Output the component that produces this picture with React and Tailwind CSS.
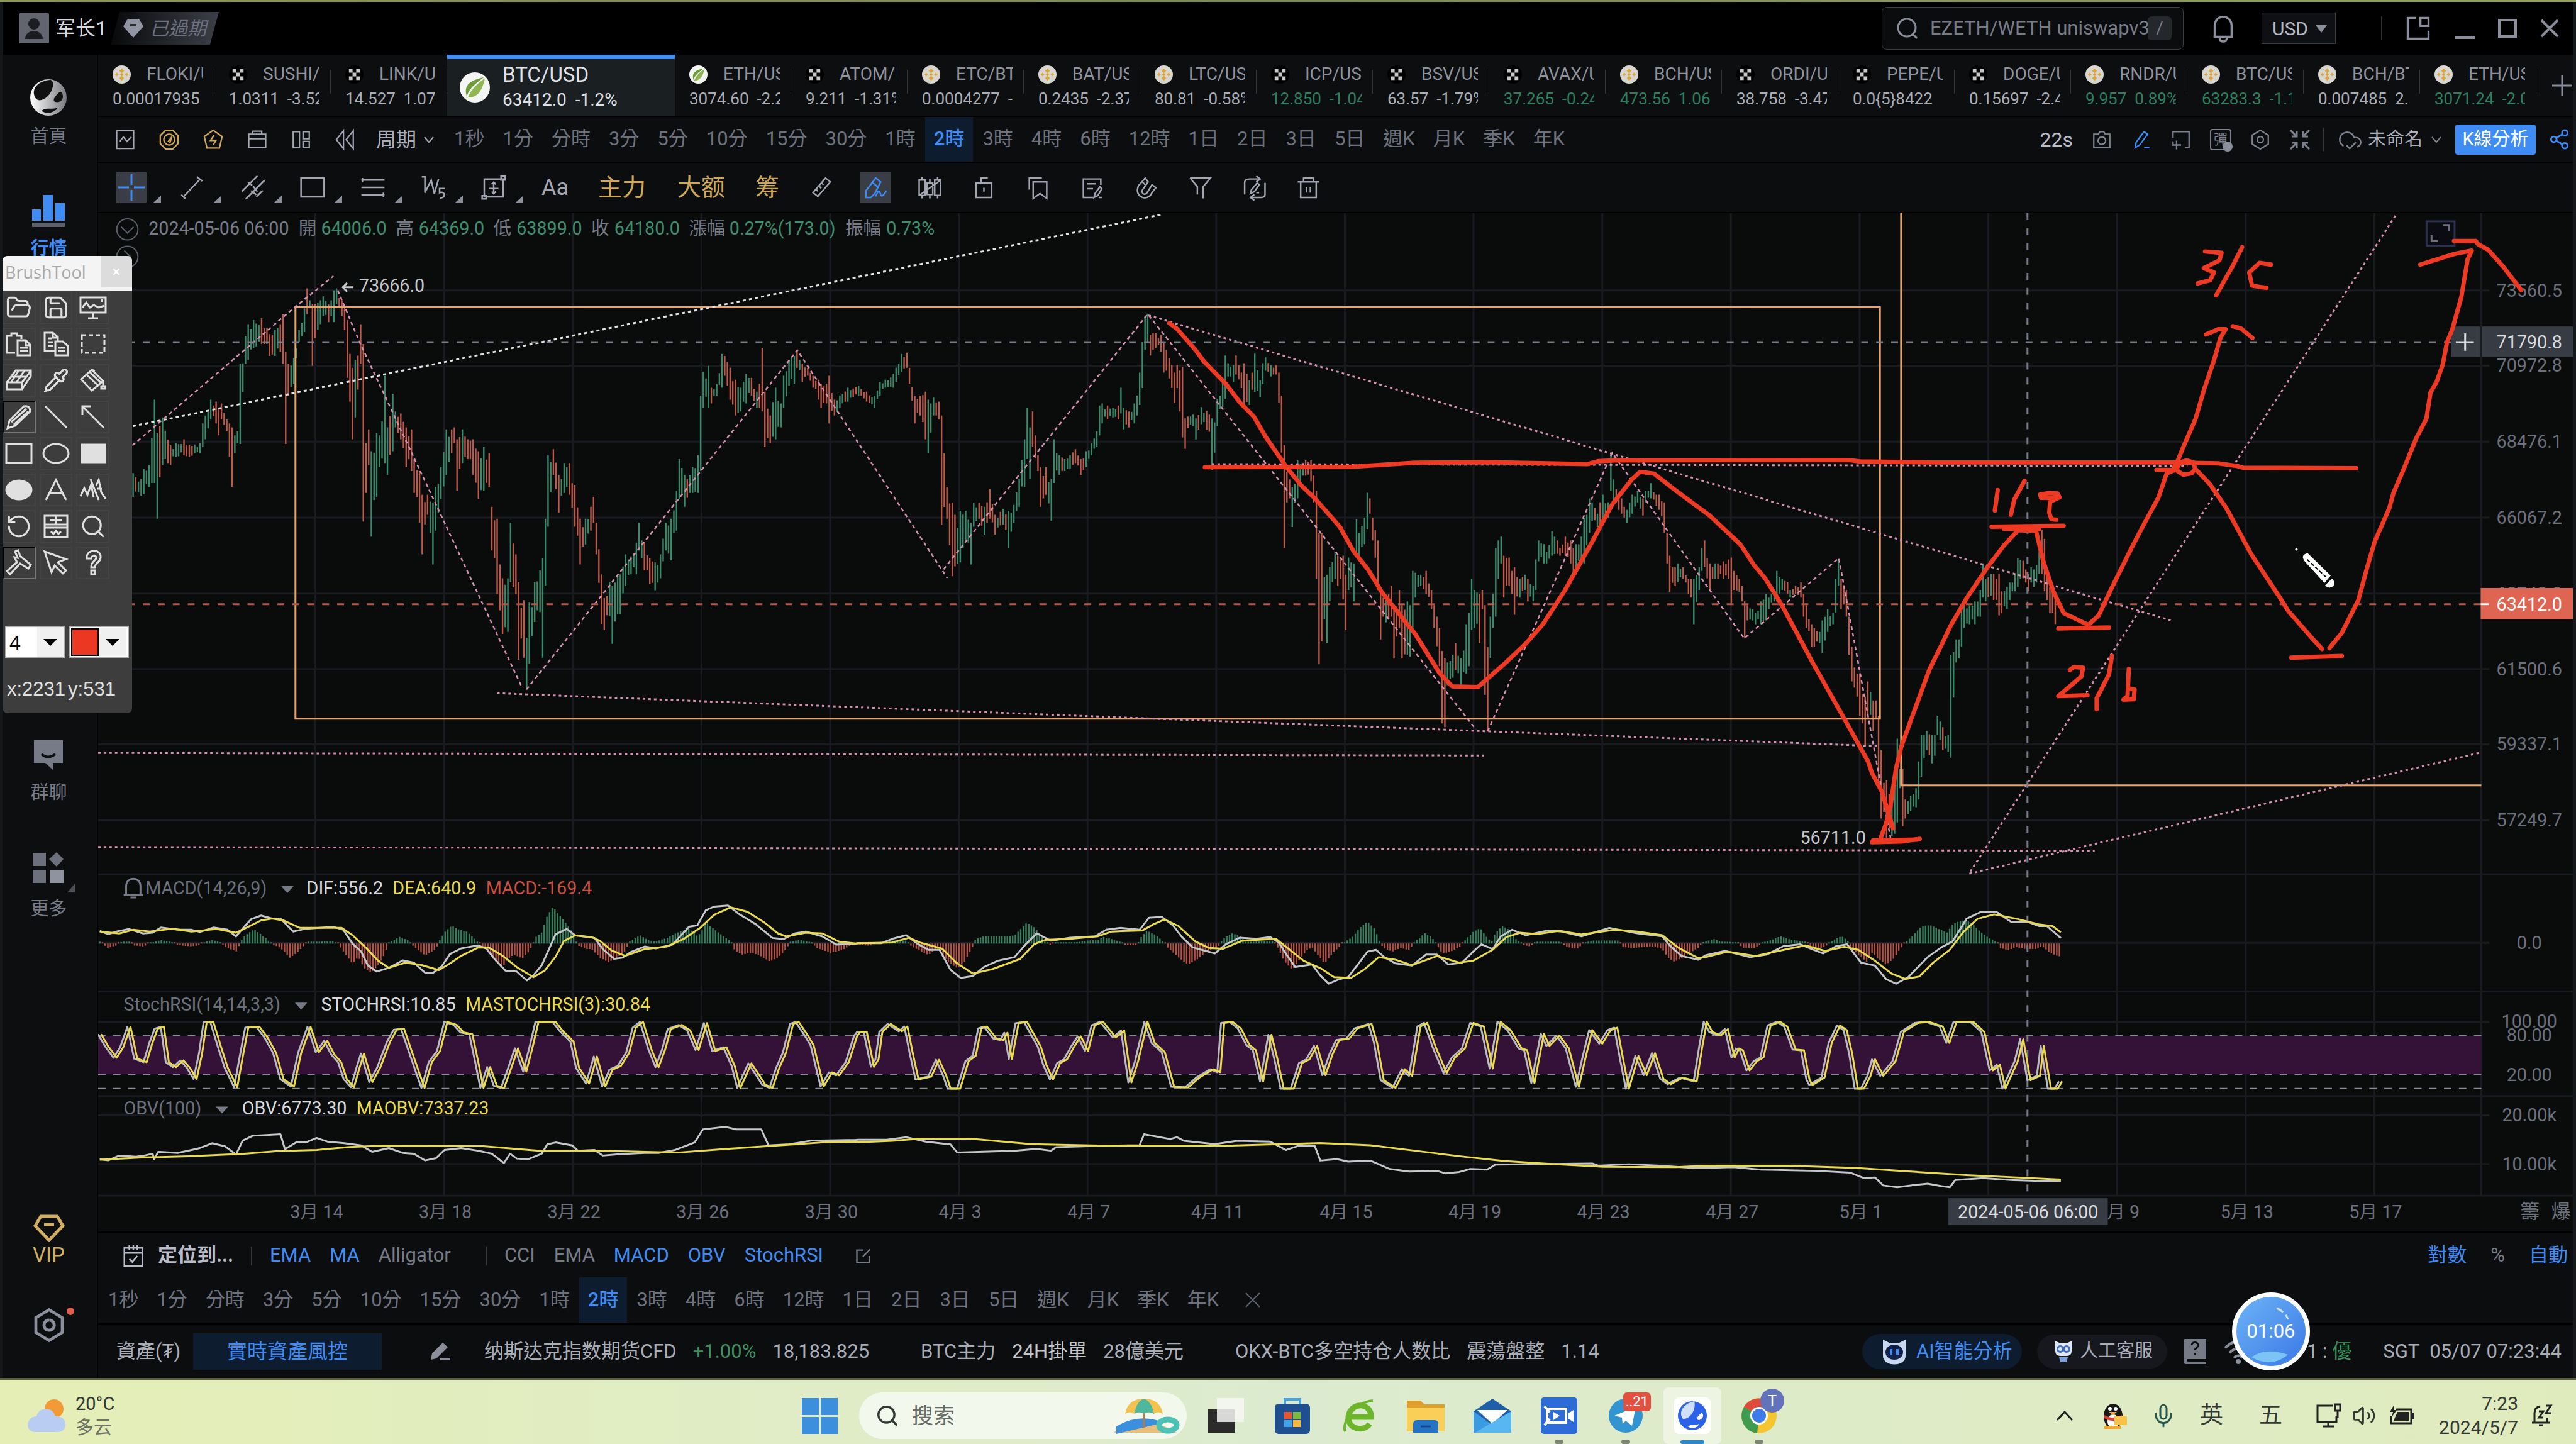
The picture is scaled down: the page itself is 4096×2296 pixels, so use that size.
import React from 'react';
import { FolderOpen, Save, Pipette, Share2, CloudCheck, Mic, Volume2, Search, RotateCcw } from 'lucide-react';

const INTERVALS = ['1秒', '1分', '分時', '3分', '5分', '10分', '15分', '30分', '1時', '2時', '3時', '4時', '6時', '12時', '1日', '2日', '3日', '5日', '週K', '月K', '季K', '年K'];

const TABS = [
  { name: 'FLOKI/USDT', price: '0.00017935', icon: 'bnb' },
  { name: 'SUSHI/USDT', price: '1.0311  -3.52%', icon: 'okx' },
  { name: 'LINK/USDT', price: '14.527  1.07%', icon: 'okx' },
  { name: 'BTC/USD', price: '63412.0  -1.2%', icon: 'leaf', active: true },
  { name: 'ETH/USD', price: '3074.60  -2.2%', icon: 'leaf' },
  { name: 'ATOM/USDT', price: '9.211  -1.31%', icon: 'okx' },
  { name: 'ETC/BTC', price: '0.0004277  -1%', icon: 'bnb' },
  { name: 'BAT/USDT', price: '0.2435  -2.37%', icon: 'bnb' },
  { name: 'LTC/USDT', price: '80.81  -0.58%', icon: 'bnb' },
  { name: 'ICP/USDT', price: '12.850  -1.04%', icon: 'okx', up: true },
  { name: 'BSV/USDT', price: '63.57  -1.79%', icon: 'okx' },
  { name: 'AVAX/USDT', price: '37.265  -0.24%', icon: 'okx', up: true },
  { name: 'BCH/USDT', price: '473.56  1.06%', icon: 'bnb', up: true },
  { name: 'ORDI/USDT', price: '38.758  -3.47%', icon: 'okx' },
  { name: 'PEPE/USDT', price: '0.0{5}8422', icon: 'okx' },
  { name: 'DOGE/USDT', price: '0.15697  -2.4%', icon: 'okx' },
  { name: 'RNDR/USDT', price: '9.957  0.89%', icon: 'bnb', up: true },
  { name: 'BTC/USDT', price: '63283.3  -1.1%', icon: 'bnb', up: true },
  { name: 'BCH/BTC', price: '0.007485  2.1%', icon: 'bnb' },
  { name: 'ETH/USDT', price: '3071.24  -2.0%', icon: 'bnb', up: true },
];

// Stroke icons on a 24 grid
const ICONS = {
  chartBox: 'M2.500 2h19v20h-19zM6 14l4-5 4 5 5-5',
  gauge: 'M8 1.500h8l6 6v9l-6 6H8l-6-6v-9zM12 6a6 6 0 1 0 .1 0M11 14l4-5-2 6z',
  bolt: 'M12 1.500l10 7-3 13H5L2 8.500zM13 7l-4 6h6l-3 5',
  box: 'M2.500 6h19v15h-19zM2.500 11h19M7 6V2.500h10V6',
  layout: 'M3 3h7v18H3zM14 3h7v8h-7zM14 14h7v7h-7z',
  rewind: 'M10 2L2 12l8 10zM21 2l-8 10 8 10z',
  camera: 'M3 6h5l2-3h4l2 3h5v15H3zM12 9a4.2 4.2 0 1 0 .1 0',
  pencil: 'M5 21l1-6L15 3l4 3-9 12zM15 21h6',
  addBox: 'M3 10V3h18v18h-4M3 14v3M7 13v10M2 18h10',
  nut: 'M12 1.5l9 5.5v10l-9 5.5L3 17V7zM12 8.5a3.5 3.5 0 1 0 .1 0',
  trend: 'M4 21L20 4M2 19l4 4M17 2l5 4',
  channel: 'M2 16L17 1M8 7l4 3M6 23l9-9M24 5L14 15M13 11l4 5M11 15l5 4M16 21l6-6',
  rect: 'M1 3h22v18H1z',
  fib: 'M1 5h22M1 12h22M1 19h22M2 3v4M22 17v4',
  wave: 'M1 2h3v15l6-12 3 13 4-14M23 13h-5v4c6-2 6 6 0 5',
  range: 'M3 4h18v17H3zM12 7v11M7.500 13h9M10 9l2-2 2 2M10 16l2 2 2-2M1 20h4v3H1zM19 1h4v4h-4z',
  ruler: 'M3 17L16 2l5 4L8 21zM9 10l2.500 2.500M12 7l2 2M14.500 14l0 0M6 13.500l2 2',
  brush: 'M2 22v-7L12 2l5 4-6 12-4 4zM9 7l5 4M12 21c3-8 4-6 5-2 1 3 3 1 6-4',
  candles: 'M4 1v3M4 20v3M1 4h6v16H1zM12 3v4M12 19v4M9 7h6v12H9zM20 1v3M20 20v3M17 4h6v16h-6zM1 20L22 5',
  lock: 'M4 7h16v15H4zM12 12v4M9 7V2h7',
  bookmark: 'M7 6h14v17l-7-5-7 5zM3 14V2h13',
  note: 'M21 9V3H3v19h10M7 8h9M7 13h6M14 22l1-4 5-7 2 2-4 7-4 2zM19 22h3',
  magnet: 'M11 2L4 10C-1 22 14 27 18 17l4-5-4-3-5 8c-3 4-7 0-4-4l5-7zM18 9M8 6l4 4',
  filter: 'M1.500 2h21L15 11v12M1.500 2L9 11v8',
  sync: 'M2 19V7q0-4 5-4h10M14 0l4 3-4 3M23 7v12q0 3-4 3H9M12 19l-4 3 4 3M8 18l1-4 6-7 2 2-5 7zM14 17h3',
  trash: 'M1 6h22M4 6v16h16V6M7 6V2h10v4M10 11v6M14 11v6',
  popout: 'M10 3H3v18h18v-7M14 3h7v7h-7z',
  calendar: 'M3 4h18v18H3zM3 9h18M8 1v5M12 1v5M16 1v5M8 15l3 3 5-6',
  edit: 'M12 4H3v17h17v-9M11 13L21 3',
  bell: 'M4 19h16M5 19v-9c0-10 14-10 14 0v9M9 20c0 4 6 4 6 0',
};

const Icon = ({ name, size = 34, width = 1.6, className = '' }) => (
  <svg width={size} height={size} viewBox="0 0 24 24" fill="none" stroke="currentColor" strokeWidth={width} className={`shrink-0 overflow-visible ${className}`} aria-hidden="true">
    <path d={ICONS[name]} />
  </svg>
);

const Chevron = ({ className = '' }) => (
  <svg width="16" height="12" viewBox="0 0 16 12" fill="none" stroke="currentColor" strokeWidth="2" className={`shrink-0 ${className}`} aria-hidden="true">
    <path d="M1 2l7 8 7-8" />
  </svg>
);

const CoinIcon = ({ kind, size }) => (
  <svg width={size} height={size} viewBox="0 0 30 30" className="shrink-0" aria-hidden="true">
    {kind === 'bnb' && (
      <>
        <circle cx="15" cy="15" r="15" fill="#d9d6cf" />
        <path d="M15 5l4 4-4 4-4-4zM15 17l4 4-4 4-4-4zM7 12l3 3-3 3-3-3zM23 12l3 3-3 3-3-3zM15 12l3 3-3 3-3-3z" fill="#d9a741" />
      </>
    )}
    {kind === 'okx' && (
      <>
        <circle cx="15" cy="15" r="15" fill="#000" />
        <path d="M6 6h6v6H6zM18 6h6v6h-6zM12 12h6v6h-6zM6 18h6v6H6zM18 18h6v6h-6z" fill="#c9c9c9" />
      </>
    )}
    {kind === 'leaf' && (
      <>
        <circle cx="15" cy="15" r="15" fill="#f4f6f3" />
        <path d="M24 5C8 8 4 14 7 24C9 17 14 12 24 5z" fill="#6f9c3a" />
        <path d="M25 6C22 20 17 25 8 25C11 18 16 12 25 6z" fill="#8fb650" />
      </>
    )}
  </svg>
);

const TitleBar = () => (
  <header className="flex h-[84px] shrink-0 items-center bg-black pr-[22px] pl-[26px] text-[#8b8f9c]">
    <svg width="48" height="48" viewBox="0 0 48 48" aria-hidden="true">
      <rect width="48" height="48" rx="2" fill="#62656f" />
      <circle cx="24" cy="17" r="9" fill="#1b1d22" />
      <path d="M10 41c0-17 28-17 28 0z" fill="#1b1d22" />
    </svg>
    <span className="ml-[10px] text-[32px] text-[#d4d6dc]">军长1</span>
    <span className="relative ml-[6px] flex h-[52px] items-center gap-[10px] pr-[20px] pl-[20px]">
      <svg className="absolute inset-0 h-full w-full" viewBox="0 0 170 52" preserveAspectRatio="none" aria-hidden="true">
        <defs>
          <linearGradient id="badge" x1="0" x2="1"><stop offset="0" stopColor="#08090a" /><stop offset="1" stopColor="#3c3f47" /></linearGradient>
        </defs>
        <path d="M14 0h156l-14 52H0z" fill="url(#badge)" />
      </svg>
      <svg className="relative" width="32" height="32" viewBox="0 0 32 32" aria-hidden="true">
        <path d="M7 1h18l7 12-16 18L0 13z" fill="#9195a3" />
        <rect x="11" y="9" width="10" height="4" fill="#2a2c33" />
      </svg>
      <span className="relative text-[30px] text-[#6c7080] italic">已過期</span>
    </span>
    <div className="ml-auto flex h-[68px] w-[480px] items-center rounded-lg border border-[#3a3d45] bg-[#0b0c0e] pr-[18px] pl-[22px]">
      <svg width="36" height="36" viewBox="0 0 36 36" fill="none" stroke="currentColor" strokeWidth="3" aria-hidden="true">
        <circle cx="17" cy="17" r="14" /><path d="M26 27l7 7" />
      </svg>
      <input aria-label="Search pair" defaultValue="EZETH/WETH uniswapv3" className="ml-[18px] min-w-0 flex-1 bg-transparent text-[31px] text-[#777b88] outline-none" />
      <kbd className="flex h-[38px] w-[38px] items-center justify-center rounded-md bg-[#24272c] font-[Roboto] text-[28px] text-[#777b88]">/</kbd>
    </div>
    <button aria-label="Alerts" className="ml-[40px]"><Icon name="bell" size={46} width={1.8} /></button>
    <div className="relative ml-[38px] h-[50px] w-[118px]">
      <select aria-label="Currency" className="h-full w-full appearance-none border border-[#3a3d45] bg-[#0f1013] pl-[16px] text-[30px] text-[#b5b8c2]"><option>USD</option></select>
      <svg className="pointer-events-none absolute top-[20px] right-[14px]" width="18" height="12" aria-hidden="true"><path d="M0 0h18l-9 12z" fill="#8b8f9c" /></svg>
    </div>
    <span className="mx-[72px] h-[38px] w-px bg-[#2b2d33]" />
    <div className="-ml-[36px] flex items-center gap-[37px]">
      <button aria-label="Pop out"><Icon name="popout" size={44} width={1.8} /></button>
      <button aria-label="Minimize" className="flex h-[34px] w-[31px] items-end"><span className="h-[4px] w-full bg-current" /></button>
      <button aria-label="Maximize" className="h-[30px] w-[30px] border-4 border-current" />
      <button aria-label="Close">
        <svg width="30" height="30" viewBox="0 0 30 30" stroke="currentColor" strokeWidth="4" aria-hidden="true"><path d="M2 2l26 26M28 2L2 28" /></svg>
      </button>
    </div>
  </header>
);

const TabBar = () => (
  <nav className="flex h-[99px] shrink-0 border-b-2 border-black bg-[#0c0e0f]">
    {TABS.map((tab) =>
      tab.active ? (
        <button key={tab.name} className="flex w-[362px] shrink-0 items-center gap-[20px] border-t-[7px] border-[#3f8cf4] bg-[#1a1f22] pl-[20px] text-left">
          <CoinIcon kind={tab.icon} size={48} />
          <span className="whitespace-pre">
            <span className="block text-[33px] leading-[40px] text-[#dfe1e6]">{tab.name}</span>
            <span className="block text-[28px] leading-[40px] text-[#dfe1e6]">{tab.price}</span>
          </span>
        </button>
      ) : (
        <button key={tab.name + tab.price} className="relative w-[185px] shrink-0 pt-[3px] pr-[18px] pl-[23px] text-left">
          <span className="flex items-center gap-[25px]">
            <CoinIcon kind={tab.icon} size={29} />
            <span className="overflow-hidden text-[28px] leading-[40px] text-[#8f939f]">{tab.name}</span>
          </span>
          <span className={`block overflow-hidden text-[26px] leading-[38px] whitespace-pre ${tab.up ? 'text-[#2e7f60]' : 'text-[#a9acb5]'}`}>{tab.price}</span>
          <span className="absolute top-[24px] right-0 h-[38px] w-px bg-[#33363d]" />
        </button>
      )
    )}
    <button aria-label="Add tab" className="flex flex-1 items-center justify-end text-[#8b8f9c]">
      <svg width="34" height="34" viewBox="0 0 34 34" stroke="currentColor" strokeWidth="3" aria-hidden="true"><path d="M17 1v32M1 17h32" /></svg>
    </button>
  </nav>
);

const Intervals = () => (
  <div className="flex h-full gap-px">
    {INTERVALS.map((label) => (
      <button key={label} className={`h-full px-[14px] text-[31px] ${label === '2時' ? 'bg-[#0d1c2e] font-medium text-[#3f8cf4]' : 'text-[#6d717e]'}`}>
        {label}
      </button>
    ))}
  </div>
);

const IntervalBar = () => (
  <div className="flex h-[73px] shrink-0 items-center border-b-2 border-black bg-[#0b0d0e] text-[#a3a6b2]">
    <div className="flex items-center gap-[36px] pl-[26px]">
      {['chartBox', 'gauge', 'bolt', 'box', 'layout', 'rewind'].map((name) => (
        <button key={name} aria-label={name} className={name === 'gauge' || name === 'bolt' ? 'text-[#cfa85c]' : ''}><Icon name={name} /></button>
      ))}
    </div>
    <button className="mr-[18px] ml-[32px] flex items-center gap-[12px] text-[32px] text-[#a9adb8]">周期<Chevron /></button>
    <Intervals />
    <div className="ml-auto flex items-center gap-[29px] text-[#7e828f]">
      <span className="text-[32px] text-[#b9bcc8]">22s</span>
      <button aria-label="Snapshot"><Icon name="camera" /></button>
      <button aria-label="Draw" className="text-[#3f8cf4]"><Icon name="pencil" /></button>
      <button aria-label="Add pane"><Icon name="addBox" /></button>
      <button aria-label="Barrage" className="relative flex h-[34px] w-[34px] items-center justify-center rounded border-2 border-current text-[22px] leading-none">
        彈<span className="absolute -right-[4px] -bottom-[4px] h-[16px] w-[16px] rounded-full bg-[#8b8f9c]" />
      </button>
      <button aria-label="Settings"><Icon name="nut" /></button>
      <button aria-label="Collapse">
        <svg width="34" height="34" viewBox="0 0 34 34" fill="none" stroke="currentColor" strokeWidth="3" aria-hidden="true"><path d="M2 2l9 9M4 12h8V4M32 2l-9 9M22 4v8h8M2 32l9-9M4 22h8v8M32 32l-9-9M30 22h-8v8" /></svg>
      </button>
    </div>
    <span className="ml-[20px] h-[38px] w-px bg-[#33363d]" />
    <button className="ml-[22px] flex items-center gap-[8px] text-[29px] text-[#a9adb8]">
      <CloudCheck size={40} strokeWidth={1.500} className="text-[#7e828f]" />未命名<Chevron className="ml-[6px] text-[#7e828f]" />
    </button>
    <button className="ml-[22px] h-[48px] w-[128px] rounded bg-[#3f8cf4] text-[29px] whitespace-nowrap text-white">K線分析</button>
    <button aria-label="Share" className="mr-[4px] ml-[20px] text-[#3f8cf4]"><Share2 size={35} /></button>
  </div>
);

const DrawBar = () => (
  <div className="flex h-[80px] shrink-0 items-center border-b-2 border-black bg-[#0b0d0e] pl-[29px] text-[#a3a6b2]">
    <div className="flex items-center gap-[48px]">
      {['cross', 'trend', 'channel', 'rect', 'fib', 'wave', 'range'].map((name) => (
        <button key={name} aria-label={name} className={`relative flex h-[48px] w-[48px] items-center justify-center ${name === 'cross' ? 'bg-[#3a3d45] text-[#3f8cf4]' : ''}`}>
          {name === 'cross' ? (
            <svg width="44" height="44" viewBox="0 0 44 44" stroke="currentColor" strokeWidth="3" aria-hidden="true"><path d="M22 1v17M22 26v17M1 22h17M26 22h17" /></svg>
          ) : (
            <Icon name={name} size={40} width={1.500} />
          )}
          <svg className="absolute -right-[23px] bottom-0" width="12" height="11" aria-hidden="true"><path d="M12 0v11H0z" fill="#8b8f9c" /></svg>
        </button>
      ))}
    </div>
    <button className="ml-[52px] text-[36px]">Aa</button>
    <button className="ml-[47px] text-[38px] text-[#cfa85c]">主力</button>
    <button className="ml-[50px] text-[38px] text-[#cfa85c]">大额</button>
    <button className="ml-[48px] text-[38px] text-[#cfa85c]">筹</button>
    <div className="ml-[43px] flex items-center gap-[38px]">
      {['ruler', 'brush', 'candles', 'lock', 'bookmark', 'note', 'magnet', 'filter', 'sync', 'trash'].map((name) => (
        <button key={name} aria-label={name} className={`flex h-[48px] w-[48px] items-center justify-center ${name === 'brush' ? 'bg-[#3a3d45] text-[#3f8cf4]' : ''}`}>
          <Icon name={name} size={37} />
        </button>
      ))}
    </div>
  </div>
);

const Sidebar = () => (
  <aside className="flex w-[152px] shrink-0 flex-col items-center border-r-2 border-black bg-[#0c0e0f] pr-[3px] text-[29px] leading-[36px] text-[#777b88]">
    <button className="mt-[39px] flex flex-col items-center gap-[15px]">
      <svg width="58" height="58" viewBox="0 0 58 58" aria-hidden="true">
        <defs><linearGradient id="ball" x1="0" x2="1"><stop offset="0" stopColor="#fff" /><stop offset="1" stopColor="#77797e" /></linearGradient></defs>
        <circle cx="29" cy="29" r="29" fill="url(#ball)" />
        <path d="M33 1C14 2 2 14 7 27c4 12 20 6 27-9 3-8 4-13-1-17z" fill="#111" />
        <path d="M46 21c-6 6-12 12-6 15 8 2 12-4 12-8 0-5-2-10-6-7z" fill="#111" />
        <path d="M18 50c8-6 18-1 26-5-5 9-20 11-26 5z" fill="#111" />
      </svg>
      首頁
    </button>
    <button className="mt-[75px] flex flex-col items-center gap-[16px] font-bold text-[#3f8cf4]">
      <svg width="52" height="51" viewBox="0 0 52 51" aria-hidden="true">
        <path d="M0 23h14v18H0zM18 0h15v41H18zM37 13h15v28H37z" fill="#3f8cf4" /><path d="M0 44h52v7H0z" fill="#5d616c" />
      </svg>
      行情
    </button>
    <button className="mt-[762px] flex flex-col items-center gap-[17px]">
      <svg width="50" height="50" viewBox="0 0 50 50" aria-hidden="true"><path d="M2 2h46v36H32v11l-12-11H2z" fill="#777b88" /><path d="M14 24q10 9 22 0" fill="none" stroke="#0d0f10" strokeWidth="4" /></svg>
      群聊
    </button>
    <button className="relative mt-[77px] flex flex-col items-center gap-[22px]">
      <svg width="50" height="50" viewBox="0 0 50 50" aria-hidden="true"><path d="M0 1h21v21H0zM0 28h21v21H0z" fill="#6c707c" /><path d="M28 28h21v21H28z" fill="#8f939f" /><path d="M26 11L38 0l11 11-11 12z" fill="#6c707c" /></svg>
      更多
      <svg className="absolute top-[50px] -right-[12px]" width="12" height="14" aria-hidden="true"><path d="M12 0v14H0z" fill="#4c4f58" /></svg>
    </button>
    <button className="mt-auto flex flex-col items-center gap-[3px] text-[33px] text-[#d3ae62]">
      <svg width="50" height="44" viewBox="0 0 50 44" fill="none" stroke="currentColor" strokeWidth="5" aria-hidden="true"><path d="M12 3h26l9 15-22 23L3 18zM17 16h16" /></svg>
      VIP
    </button>
    <button aria-label="Preferences" className="relative mt-[65px] mb-[56px] text-[#8b8f9c]">
      <Icon name="nut" size={56} width={2} />
      <span className="absolute top-0 -right-[12px] h-[12px] w-[12px] rounded-full bg-[#e0604f]" />
    </button>
  </aside>
);

// Each series is recorded in tiles: origin x, origin y, x scale, y scale, then the points of that tile
const flatten = (tiles) =>
  tiles.flatMap(([x0, y0, sx, sy, raw]) => raw.trim().split(/\s+/).map((p) => {
    const [x, ...ys] = p.split(',').map(Number);
    return [x0 + x * sx, ...ys.map((y) => y0 + y * sy)];
  }));

const toPath = (pts, dx = 0) => pts.map(([x, y], i) => `${i ? 'L' : 'M'}${(x + dx).toFixed(1)} ${y.toFixed(1)}`).join('');

const noise = (n) => {
  const v = Math.sin(n * 127.1) * 43758.5453;
  return v - Math.floor(v);
};

const PRICE = flatten([
  [160, 400, 1.0842, 0.6378, `
    50,565,625 60,580,622 66,555,618 75,545,600 80,540,590 82,380,590 86,465,680 92,430,500 95,425,545 105,495,545 115,490,525 125,480,520 135,495,525 148,490,515
    152,440,500 158,420,480 165,380,430 172,385,440 177,400,470 182,390,430 190,430,460 196,450,600 200,470,515 206,460,490 210,290,492 215,220,290 222,190,280 230,180,250
    240,175,240 247,200,240 252,215,270 260,205,270 268,190,260 272,165,290 276,260,492 282,290,370 288,275,340 296,205,235 303,150,210 307,100,165 312,130,150 316,140,295
    320,140,225 326,130,190 332,120,170 338,140,185 345,130,170 348,105,185 353,100,140 358,130,170 362,145,205 367,180,325 372,265,385 376,300,480 380,280,425 388,190,290
    391,240,687 396,490,615 400,455,545 404,510,725 410,465,625 416,470,550 423,320,540 427,450,570 433,365,510 440,410,450 448,415,480 455,450,550 462,455,560 468,530,615
    475,560,690 480,620,770 488,620,670 495,640,795 500,600,710 508,550,630 515,455,570 522,455,515 527,450,490 531,480,610 538,455,540 546,480,530 552,480,570 560,510,630
    568,500,610 576,515,600 582,650,760 590,680,870 598,830,970 604,830,965 610,690,840 616,770,870 622,840,1035 628,885,1030 633,980,1110 638,890,1045 645,840,940
    652,810,915 657,780,1030 661,680,850 665,520,700 672,505,570 680,570,665 688,540,615 696,540,620 704,595,700 712,680,795 720,680,745 728,650,710 732,625,690 738,690,770
    744,820,945 748,880,960 755,840,925 760,850,995 766,820,920 772,820,920 780,770,850 788,775,820 795,740,820 800,690,760 808,740,810 815,780,845 822,790,860 830,770,830
    838,690,760 848,680,785 856,610,710 860,530,630 866,570,650 873,570,615 880,550,615 887,520,615 891,370,560 896,310,400 902,295,400 908,350,390 915,340,370 922,265,350
    928,270,320 935,300,380 942,330,420 950,350,410 958,315,390 966,325,370 973,360,400 978,340,400 982,250,410 987,360,500 993,420,490 1000,350,480 1008,390,450
    1015,320,400 1022,280,345 1028,270,340 1034,255,300 1040,290,335 1048,300,320 1056,320,350 1064,330,380 1070,340,400 1076,340,390 1082,320,440 1090,380,420 1098,370,400
    1110,350,385 1125,345,370 1135,360,385 1147,370,400 1155,335,370 1165,330,350 1175,315,350 1182,300,335 1188,265,310 1195,262,300 1202,300,340 1207,370,440 1215,370,420
    1222,360,480 1228,380,515 1236,375,420 1244,385,430 1249,420,695 1256,600,680 1264,640,825 1268,670,800 1276,660,790 1284,660,735 1290,690,795 1297,640,700 1305,640,680
    1313,650,720 1320,605,680 1328,670,720 1338,655,695 1347,660,755 1355,645,690 1363,580,650 1370,480,600 1375,400,530 1380,450,580 1383,410,500 1390,520,560 1396,550,650
    1403,550,620 1411,580,685 1415,480,590 1422,520,570 1430,530,560 1438,520,555 1446,505,540 1455,530,570 1462,510,550 1470,490,520 1478,460,500 1480,395,470 1486,390,440
    1492,395,430 1500,400,425 1508,395,430 1514,350,415 1519,400,455 1525,410,450 1532,390,440 1538,370,420`],
  [1800, 440, 0.8929, 0.6122, `
    33,260,345 38,180,300 42,115,200 46,112,170 50,105,180 54,160,215 60,155,200 66,155,195 72,160,205 78,180,260 85,200,255 93,240,300 98,260,340 103,240,300 110,245,325
    113,330,430 117,380,460 123,375,405 130,370,400 138,380,435 145,350,395 153,360,410 160,370,415 166,380,515 171,390,470 176,330,400 183,285,350 190,215,330 196,235,270
    202,240,285 210,215,265 216,260,300 222,235,345 230,280,345 238,260,305 243,210,310 250,280,325 257,235,290 263,220,255 270,240,270 278,240,265 283,260,340 288,320,390
    292,360,470 295,450,720 300,520,600 305,540,590 311,560,665 318,490,590 325,500,550 333,490,530 344,490,545 350,530,600 354,570,800 359,680,1025 364,680,965 370,790,895
    374,850,970 378,770,860 384,735,800 391,740,820 397,750,800 403,740,855 407,790,935 412,745,830 418,760,860 424,645,730 432,680,745 438,640,710 445,575,670 450,590,630
    456,640,700 462,700,830 468,830,960 474,850,900 480,850,915 487,820,900 493,870,1010 500,830,930 508,870,1010 514,860,1000 521,870,1005 527,780,930 533,785,850
    541,790,820 550,780,840 558,830,880 566,870,930 573,930,1030 578,990,1180 583,1010,1190 590,1020,1080 597,1000,1060 605,970,1040 613,1010,1080 620,920,1050 626,890,1030
    632,800,935 638,830,930 644,840,970 651,830,880 656,870,1105 661,980,1200 668,900,1010 673,720,900 680,700,800 685,690,760 690,740,850 697,745,820 705,780,840
    711,770,895 718,800,850 726,790,830 735,800,860 742,820,860 748,750,830 753,700,755 760,710,760 768,730,760 777,675,740 785,700,735 792,720,740 800,690,740 808,700,760
    814,720,800 820,710,790 828,690,760 836,640,760 842,590,680 848,600,650 856,630,665 863,600,670 870,580,640 876,600,640 882,470,570 888,540,600 895,580,620 902,590,630
    912,620,655 920,580,630 930,570,600 938,590,635 946,570,600 955,550,590 963,580,610 970,580,620 977,600,680 982,680,760 990,740,835 997,770,820 1005,760,810 1012,770,800
    1020,800,840 1028,800,850 1033,800,920 1040,770,830 1046,720,780 1052,700,770 1060,760,830 1068,760,800 1076,760,800 1085,755,800 1092,750,800 1097,745,865 1104,780,830
    1112,800,835 1118,820,860 1122,860,955 1128,870,910 1136,880,910 1144,890,920 1152,860,920 1160,840,910 1168,850,880 1176,830,860 1182,780,860 1190,800,830 1198,810,840
    1206,830,850 1215,820,840 1222,810,850 1230,840,900 1236,870,930 1243,920,980 1250,930,980 1257,940,970 1265,910,995 1272,880,940 1280,890,920 1288,800,890 1293,750,820
    1298,800,880 1305,830,900 1312,900,1000 1318,980,1070 1325,1050,1110 1332,1050,1160 1340,1110,1240 1346,1070,1160 1352,1120,1200 1360,1120,1170 1364,1160,1340
    1370,1250,1430 1376,1340,1480 1380,1330,1470 1386,1380,1475 1392,1330,1470 1396,1220,1440 1402,1300,1350 1408,1300,1450 1414,1380,1430 1422,1370,1410 1430,1350,1400
    1436,1280,1380 1443,1210,1320 1450,1200,1250 1458,1210,1285 1465,1210,1265 1472,1160,1210 1480,1190,1250 1487,1210,1255 1493,1210,1270 1496,1000,1260 1502,960,1020
    1508,960,1010 1514,880,980 1520,870,930 1527,870,920 1535,860,920 1545,830,900 1550,760,850 1558,800,860`],
  [3100, 340, 0.662, 0.7015, `
    151,830,880 158,830,890 165,830,890 170,830,925 177,870,920 185,860,910 192,850,890 200,850,870 208,830,870 216,795,860 224,800,840 230,820,850 237,830,870 245,815,850
    254,820,860 262,810,850 270,790,830 275,730,830 281,750,870 287,830,890 293,860,920 300,860,920 307,880,945`],
]);

const SLOT = 4.3;

const buildCandles = () => {
  const first = PRICE[0][0];
  const count = Math.round((PRICE[PRICE.length - 1][0] - first) / SLOT);
  const slots = Array(count + 1).fill(null);
  PRICE.forEach(([x, hi, lo]) => {
    const i = Math.round((x - first) / SLOT);
    slots[i] = slots[i] ? [Math.min(slots[i][0], hi), Math.max(slots[i][1], lo)] : [hi, lo];
  });
  let prev = 0;
  for (let i = 1; i <= count; i++) {
    if (!slots[i]) continue;
    for (let k = prev + 1; k < i; k++) {
      const t = (k - prev) / (i - prev);
      const hi = slots[prev][0] + (slots[i][0] - slots[prev][0]) * t;
      const lo = slots[prev][1] + (slots[i][1] - slots[prev][1]) * t;
      const h = lo - hi;
      slots[k] = [hi + h * 0.3 * noise(k), lo - h * 0.3 * noise(k + 900)];
    }
    prev = i;
  }
  let up = '';
  let down = '';
  slots.forEach(([hi, lo], i) => {
    const next = slots[Math.min(i + 2, count)];
    const last = slots[Math.max(i - 2, 0)];
    const drift = (next[0] + next[1] - last[0] - last[1]) / 2 + (noise(i * 3) - 0.5) * 30;
    const seg = `M${(first + i * SLOT).toFixed(1)} ${hi.toFixed(1)}V${lo.toFixed(1)}`;
    if (drift < 0) up += seg;
    else down += seg;
  });
  return { up, down };
};

const HIST = flatten([
  [0, 0, 0.8929, 0.5995, `180,5 195,-12 210,-5 220,5 235,5 240,-5 258,-8 275,3 290,9 305,5 320,-4 345,-8 360,-4 370,5 382,9 395,5 405,-8 415,-15 427,-22 433,5 440,20 457,38 470,25 483,8
    492,-3 505,-12 522,-38 535,-25 548,-4 555,5 575,5 597,7 610,-3 620,-25 635,-55 645,-35 655,-65 668,-78 680,-60 692,-30 700,3 720,18 735,8 745,-8 765,-32 785,-15 790,5 800,30
    813,48 825,38 840,32 855,12 865,-5 875,-15 890,-45 905,-62 915,-40 925,-30 940,-40 950,-25 958,-5 965,18 975,30 985,75 995,98 1005,80 1015,62 1030,30 1040,-5 1055,-15
    1065,-15 1080,-38 1095,-50 1110,-38 1125,-20 1133,5 1152,22 1165,10 1180,5 1200,15 1220,30 1240,40 1255,20 1262,30 1270,58 1285,38 1300,22 1315,5 1322,-18 1335,-30
    1350,-25 1365,-30 1385,-48 1400,-38 1415,-15 1422,5 1440,10 1460,3 1470,-12 1495,-25 1515,-18 1530,-5 1540,-3`],
  [1380, 0, 0.8929, 0.5867, `20,-6 35,3 55,8 85,8 95,-8 125,-32 140,-12 150,-30 160,-50 178,-68 190,-50 205,-8 210,12 225,20 260,20 280,22 290,38 302,57 315,45 325,28 335,5 345,-5 355,3
    390,3 410,8 430,10 440,18 455,12 470,5 480,-5 500,-5 508,18 518,35 532,25 548,5 555,-10 575,-38 592,-58 610,-42 625,-22 645,-12 655,12 670,28 685,22 695,5 710,5 745,8
    755,-15 765,-48 780,-72 790,-50 805,-20 815,-10 830,-40 838,-55 850,-30 865,-8 875,5 890,20 900,42 915,60 928,40 935,12 943,-12 960,-22 975,-12 990,-18 1000,5 1018,28
    1030,18 1040,-5 1050,-28 1068,-20 1085,-5 1092,12 1105,32 1118,42 1128,20 1138,3 1145,30 1158,48 1170,38 1182,12 1195,-4 1208,-8 1220,5 1260,5 1272,-8 1292,-15 1305,3
    1320,8 1365,8 1375,-10 1390,-12 1430,-8 1445,-15 1455,-38 1467,-50 1480,-40 1495,-25 1510,-12 1520,5`],
  [2740, 0, 0.8916, 0.5867, `5,8 15,12 30,5 45,4 60,4 65,-12 90,-12 105,4 120,10 135,20 150,12 165,8 180,5 190,-12 205,-15 218,-5 228,8 245,20 255,10 262,-12 275,-30 290,-50 300,-25
    310,-40 325,-58 340,-40 350,-15 362,5 375,25 390,48 405,50 420,40 435,30 445,52 455,60 468,64 480,55 495,32 510,15 525,5 530,-12 545,-18 560,-10 575,-15 595,-15 607,-8
    620,-25 635,-35 641,-35`],
]);

const buildHistogram = () => {
  let up = '';
  let down = '';
  let k = 0;
  for (let x = HIST[0][0]; x < HIST[HIST.length - 1][0]; x += SLOT) {
    while (HIST[k + 1][0] < x) k++;
    const [xa, a] = HIST[k];
    const [xb, b] = HIST[k + 1];
    const v = a + ((b - a) * (x - xa)) / (xb - xa);
    const seg = `M${x.toFixed(1)} 1516V${(1516 - (Math.abs(v) < 2 ? 2 : v)).toFixed(1)}`;
    if (v >= 0) up += seg;
    else down += seg;
  }
  return { up, down };
};

const T8 = [0, 1380, 0.8929, 0.5995];
const T9 = [1380, 1400, 0.8929, 0.5867];
const T10 = [2740, 1400, 0.8916, 0.5867];

const DIF = flatten([
  [...T8, `180,193 195,202 210,195 232,188 258,200 275,198 290,184 320,190 345,190 360,196 385,184 410,190 425,208 438,185 452,162 470,152 490,160 505,160 528,195 548,188 575,185
    600,182 618,190 635,228 650,248 662,285 678,302 700,292 725,272 745,278 765,305 780,305 795,288 810,255 830,240 860,232 875,240 890,268 910,300 930,302 948,326 960,312
    975,285 990,235 1000,202 1020,188 1035,205 1070,212 1085,242 1105,268 1120,265 1135,250 1160,235 1180,240 1210,230 1240,182 1255,178 1270,138 1285,128 1310,125 1330,148
    1360,175 1390,212 1410,215 1430,200 1450,195 1480,208 1505,230 1540,227`],
  [...T9, `0,197 40,197 60,185 85,175 105,198 125,215 145,215 165,270 183,292 205,287 225,262 250,245 280,235 300,200 320,170 345,190 380,182 425,178 445,160 470,155 505,160 522,127
    545,125 565,148 580,178 600,208 640,225 660,200 685,182 715,185 740,180 755,195 770,230 785,262 815,255 830,285 845,308 865,295 880,290 900,250 915,220 930,215 945,235
    965,252 995,258 1020,228 1040,228 1060,255 1085,250 1105,220 1120,200 1140,213 1155,178 1175,160 1200,175 1240,162 1265,165 1300,178 1350,155 1400,170 1445,178 1460,205
    1480,232 1510,242`],
  [...T10, `0,230 35,218 80,235 110,228 140,205 170,200 190,212 212,225 235,205 255,200 280,250 305,258 325,295 343,308 365,290 400,235 425,208 445,192 470,130 495,112 525,112
    550,138 580,138 600,150 615,150 640,183`],
]);

const DEA = flatten([
  [...T8, `180,195 215,200 240,190 270,195 310,187 345,195 390,188 425,198 450,180 470,165 490,160 510,165 540,185 580,185 615,185 635,205 660,240 680,272 700,292 730,278 760,285
    790,298 810,280 830,260 860,238 880,238 905,260 930,290 960,317 980,300 1000,262 1015,220 1035,205 1065,210 1080,220 1100,245 1125,260 1160,242 1200,235 1230,215 1260,185
    1285,150 1315,130 1345,142 1375,170 1400,200 1415,208 1450,198 1480,200 1510,222 1540,227`],
  [...T9, `0,197 60,195 90,182 110,195 150,212 175,250 205,280 240,268 290,240 315,200 335,188 380,185 430,178 455,165 510,162 530,145 550,132 575,150 605,192 630,210 655,212 690,190
    750,185 775,215 800,245 830,265 855,290 885,292 910,268 935,235 965,242 995,257 1040,232 1080,250 1105,245 1140,215 1165,180 1190,168 1220,172 1260,163 1300,173 1360,160
    1400,165 1445,175 1475,210 1510,238`],
  [...T10, `0,235 40,220 90,232 150,212 180,203 215,218 250,207 275,215 305,245 335,280 360,295 385,288 410,250 440,215 465,165 490,130 520,118 560,130 600,145 625,150 640,167`],
]);

const STOCH = flatten([
  [...T8, `180,470 192,500 208,533 220,505 233,450 245,535 262,545 272,495 282,455 293,450 302,545 315,558 328,540 340,560 352,590 362,520 370,438 382,437 395,500 408,560 425,612
    435,530 445,452 465,450 480,480 495,520 508,590 527,610 540,520 557,450 572,518 587,488 600,525 612,545 622,590 635,612 645,560 653,522 668,598 682,560 700,490 712,458
    725,455 740,520 762,614 775,545 790,515 803,437 820,445 832,465 848,470 858,540 868,614 880,558 892,608 905,614 918,560 930,508 945,570 957,500 967,437 998,437 1010,460
    1030,490 1040,560 1058,602 1072,530 1087,610 1100,565 1115,555 1130,520 1142,452 1155,437 1170,510 1183,558 1195,510 1205,456 1225,445 1240,460 1255,512 1270,440 1285,515
    1305,505 1320,555 1330,614 1350,548 1362,575 1375,605 1388,614 1400,560 1412,520 1425,442 1435,437 1450,470 1462,500 1480,610 1495,572 1508,580 1525,545 1540,475`],
  [...T9, `0,440 12,440 25,535 33,515 40,440 55,418 75,438 85,425 95,500 105,570 128,562 142,516 155,560 163,595 180,595 195,520 208,505 218,430 228,425 245,458 258,462 265,442
    273,514 285,416 300,412 312,445 325,480 335,530 347,570 360,525 372,515 385,480 397,452 410,492 422,422 437,412 460,455 475,436 488,578 500,520 517,412 530,470 548,495
    565,590 590,592 610,565 635,542 648,550 655,415 670,412 685,430 700,475 712,490 725,575 740,448 750,510 762,595 780,595 795,525 808,515 822,478 837,558 850,500 862,462
    880,458 895,430 920,418 930,470 942,572 963,593 980,542 993,560 1008,425 1020,415 1035,480 1055,552 1070,510 1088,485 1103,415 1122,425 1138,540 1152,412 1170,435 1190,485
    1200,490 1213,580 1230,445 1240,478 1258,450 1275,485 1293,590 1305,510 1317,435 1335,472 1350,435 1362,428 1372,510 1383,595 1400,506 1415,558 1430,498 1445,568 1458,583
    1480,565 1505,575 1515,480`],
  [...T10, `0,412 10,440 25,450 38,432 50,510 58,485 65,490 77,545 90,520 102,510 115,422 132,412 145,425 160,488 175,490 185,570 190,585 212,565 225,470 240,422 252,435 262,500
    272,595 283,595 295,560 303,515 318,560 340,520 355,440 380,415 400,412 425,425 437,470 450,412 480,412 500,440 515,545 528,530 538,595 560,520 570,460 583,572 600,560
    607,478 620,595 632,595 640,575`],
]);

const OBV = flatten([
  [...T8, `180,805 195,808 215,795 245,798 260,795 275,790 278,805 285,785 320,788 345,780 360,775 382,762 405,770 425,792 437,755 455,742 505,738 513,778 535,758 550,760 570,748
    590,758 620,762 650,768 670,785 700,775 725,788 745,790 765,808 785,802 800,780 830,775 860,782 885,790 907,815 918,790 930,803 950,805 975,790 985,765 1000,760 1030,768
    1040,782 1070,780 1085,795 1110,792 1160,788 1185,788 1215,780 1250,760 1265,725 1305,718 1325,725 1370,725 1383,768 1420,765 1460,755 1540,753`],
  [...T9, `0,735 50,735 85,728 120,740 165,748 177,770 280,765 320,760 345,765 355,755 430,752 505,750 513,720 560,733 572,728 585,738 640,747 680,738 740,740 768,763 790,752 820,752
    830,792 860,788 880,795 920,792 955,815 990,822 1040,820 1055,827 1080,823 1100,815 1130,817 1145,803 1320,800 1330,806 1385,802 1440,806 1500,812`],
  [...T10, `0,812 50,810 100,817 200,820 260,825 285,840 305,838 320,860 345,865 380,858 400,855 425,862 440,865 450,845 500,840 550,845 600,848 640,848`],
]);

const MAOBV = flatten([
  [...T8, `180,806 260,800 340,797 440,790 500,783 570,780 630,772 680,769 870,770 970,782 1080,782 1220,787 1300,778 1400,768 1480,760 1540,758`],
  [...T9, `0,742 60,738 110,732 200,732 310,747 430,751 670,751 830,744 920,750 1000,765 1080,780 1160,793 1240,801 1340,809 1470,810`],
  [...T10, `0,806 150,806 270,812 370,822 470,832 560,838 640,844`],
]);

// Freehand marks
const C6 = [1800, 440, 0.8929, 0.6122];
const C7 = [3100, 340, 0.662, 0.7015];
const STROKES = [
  [[...C6, '88,130 102,145 135,200 150,230 190,290 215,338 240,375 262,430 300,510 325,555 350,590 395,665 420,730 445,775 470,835 530,945 575,1050 597,1083 643,1085 690,1025 730,970 760,920 800,830 850,700 885,605 920,540 935,520 960,525 1000,570 1060,635 1115,710 1140,765 1160,800 1190,870 1245,1020 1305,1175 1345,1280 1352,1310 1370,1360 1390,1455']],
  [[...C6, '152,508 415,507 530,496 670,495 840,500 860,492 890,490 1310,489 1330,493 1440,495'], [...C7, '0,575 600,575 700,577 745,583 760,587 1035,588']],
  [[...C6, '1368,1480 1378,1440 1385,1400 1395,1300 1405,1240 1430,1140 1455,1040'], [...C7, '30,990 50,950 90,885 140,815 180,765 215,730 258,732 275,800 300,870 325,920 385,947 410,925 440,865 490,770 515,725 555,655 575,600 600,590']],
  [[...C6, '1352,1492 1405,1490 1438,1483']],
  [[...C6, '1354,1487 1434,1485']],
  [[...C7, '150,722 325,720']],
  [[...C7, '180,727 265,728']],
  [[...C7, '165,638 158,685']],
  [[...C7, '230,617 205,660 197,695']],
  [[...C7, '315,655 310,646 290,645 268,648 270,656 312,656 292,665 290,690 295,705 307,706']],
  [[...C7, '312,955 435,953']],
  [[...C7, '550,592 590,592 600,575 615,540 645,475 665,410 690,340 705,290 718,270 700,270 670,282']],
  [[...C7, '735,263 755,268 783,290']],
  [[...C7, '600,587 608,575 622,570 640,575 644,590 635,600 615,603 602,595 600,587']],
  [[...C7, '645,590 680,625 720,680 780,785 850,885 870,915 930,980 952,1002']],
  [[...C7, '877,1022 1000,1018']],
  [[...C7, '970,1000 1000,965 1040,890 1060,820 1080,755 1115,680 1125,645 1150,590 1180,520 1205,475 1215,415 1230,390 1245,350 1255,300 1268,270 1290,195 1305,110 1315,90 1275,97 1190,122']],
  [[...C7, '1272,68 1325,68 1330,75 1355,88 1390,125 1435,180']],
  [[...C7, '668,92 708,95 703,112 665,130 690,140 680,158 650,165']],
  [[...C7, '758,82 735,125 695,192']],
  [[...C7, '828,122 800,118 775,140 782,170 800,173 817,175']],
  [[...C7, '340,1050 350,1043 372,1045 368,1065 312,1110 383,1108']],
  [[...C7, '442,1018 435,1060 405,1115 405,1140']],
  [[...C7, '483,1048 480,1110 470,1118 495,1117 497,1095 482,1092']],
];

const PRICE_LABELS = [['73560.5', 467], ['70972.8', 588], ['68476.1', 710], ['66067.2', 832], ['63742.0', 954], ['61500.6', 1075], ['59337.1', 1196], ['57249.7', 1318]];
const PANE_LABELS = [['0.0', 1515], ['100.00', 1641], ['80.00', 1663], ['20.00', 1727], ['20.00k', 1792], ['10.00k', 1870]];
const DATES = ['3月 14', '3月 18', '3月 22', '3月 26', '3月 30', '4月 3', '4月 7', '4月 11', '4月 15', '4月 19', '4月 23', '4月 27', '5月 1', '', '5月 9', '5月 13', '5月 17'];

const SUMMARY = [
  [239, '2024-05-06 06:00', '#777b88'], [480, '開', '#777b88'], [516, '64006.0', '#3f8f70'], [636, '高', '#777b88'], [673, '64369.0', '#3f8f70'], [793, '低', '#777b88'],
  [830, '63899.0', '#3f8f70'], [950, '收', '#777b88'], [987, '64180.0', '#3f8f70'], [1107, '漲幅', '#777b88'], [1172, '0.27%(173.0)', '#3f8f70'], [1358, '振幅', '#777b88'], [1424, '0.73%', '#3f8f70'],
];

const LEGENDS = [
  { y: 1437, items: [[234, 'MACD(14,26,9)', '#6c707c'], [493, 'DIF:556.2', '#d8dade'], [631, 'DEA:640.9', '#e9da4e'], [781, 'MACD:-169.4', '#c9503f']], caret: 462 },
  { y: 1624, items: [[199, 'StochRSI(14,14,3,3)', '#6c707c'], [516, 'STOCHRSI:10.85', '#d8dade'], [748, 'MASTOCHRSI(3):30.84', '#e9da4e']], caret: 484 },
  { y: 1791, items: [[199, 'OBV(100)', '#6c707c'], [389, 'OBV:6773.30', '#d8dade'], [573, 'MAOBV:7337.23', '#e9da4e']], caret: 357 },
];

const Chart = () => {
  const candles = buildCandles();
  const hist = buildHistogram();
  return (
    <svg className="block min-h-0 w-full flex-1 bg-[#0a0c0c] font-[Roboto,'Noto_Sans_CJK_TC',sans-serif]" viewBox="158 343 3975 1635" preserveAspectRatio="xMinYMin meet" fontSize="29" role="img" aria-label="BTC/USD chart">
      <g stroke="#191b21" strokeWidth="3">
        {DATES.map((d, i) => <path key={i} d={`M${507 + i * 206.7} 343V1921`} />)}
        {PRICE_LABELS.map(([p, y]) => <path key={p} d={`M158 ${y}H3999`} />)}
        {[1405, 1593, 1761, 1921].map((y) => <path key={y} d={`M158 ${y}H4133`} />)}
        {[1515, 1642, 1792, 1870].map((y) => <path key={y} d={`M158 ${y}H3999`} />)}
        <path d="M3986 343V1921" />
      </g>
      <rect x="158" y="1665" width="3828" height="61" fill="#341137" />
      <path d="M158 1664H3986M158 1727H3986M158 1749H3986" stroke="#8a8d96" strokeWidth="2" strokeDasharray="12 12" />

      <g fill="none" strokeWidth="2.400">
        <path d={candles.up} stroke="#3a8a6c" />
        <path d={candles.down} stroke="#bd5a49" />
        <path d={hist.up} stroke="#35805f" />
        <path d={hist.down} stroke="#b55243" />
      </g>

      <g fill="none" stroke="#e6a56f" strokeWidth="3">
        <path d="M475 494H3020V1155H475z" />
        <path d="M3054 343V1262H3986" />
      </g>
      <g fill="none" stroke="#d68fb0" strokeWidth="3" strokeDasharray="4 5">
        <path d="M158 1210L2384 1214" />
        <path d="M158 1361L3365 1367" />
        <path d="M799 1114L1700 1149L3018 1199" />
        <path d="M1845 507L3188 908L3487 997" />
        <path d="M1947 746L3514 749" />
        <path d="M3982 1210L3163 1404L3848 347" />
      </g>
      <g fill="none" stroke="#d68fb0" strokeWidth="2.500" strokeDasharray="6 5">
        <path d="M213 716L475 493L536 444" />
        <path d="M543 467L578 550L839 1105M846 1108L1281 563L1522 929M1516 915L1844 505L2371 1172M2390 1175L2590 728L2802 1026L2954 897L3037 1346" />
      </g>
      <path d="M214 685L1867 345" fill="none" stroke="#e4e4e4" strokeWidth="3" strokeDasharray="5 5" />
      <path d="M158 550H3937M3257 343V1921" fill="none" stroke="#777b88" strokeWidth="3" strokeDasharray="11 13" />
      <path d="M158 971H3986" stroke="#b85445" strokeWidth="3" strokeDasharray="11 13" />

      <g fill="none" strokeWidth="3" strokeLinejoin="round">
        <path d={toPath(DIF)} stroke="#c4c6ca" />
        <path d={toPath(DEA)} stroke="#e9da4e" />
        <path d={toPath(STOCH, -3)} stroke="#b9bbc0" />
        <path d={toPath(STOCH, 2)} stroke="#e9da4e" />
        <path d={toPath(OBV)} stroke="#c4c6ca" />
        <path d={toPath(MAOBV)} stroke="#e9da4e" />
      </g>

      <g fill="#6c707c" textAnchor="middle">
        {PRICE_LABELS.concat(PANE_LABELS).map(([p, y]) => <text key={p} x="4063" y={y + 10}>{p}</text>)}
        {DATES.map((d, i) => <text key={i} x={509 + i * 206.7} y="1957">{d}</text>)}
        <text x="4064" y="1957" fontSize="31">籌</text>
        <text x="4114" y="1957" fontSize="31">爆</text>
      </g>
      <rect x="3937" y="525" width="47" height="49" fill="#363b44" />
      <rect x="3987" y="525" width="146" height="49" fill="#363b44" />
      <path d="M3945 550H3974M3960 536V564" stroke="#d8dade" strokeWidth="3" />
      <rect x="3985" y="945" width="148" height="50" fill="#dd6552" />
      <path d="M3985 971H3998" stroke="#fff" strokeWidth="3" />
      <rect x="3130" y="1925" width="256" height="43" fill="#363b44" />
      <g fill="#d8dade" textAnchor="middle">
        <text x="4063" y="560">71790.8</text>
        <text x="4063" y="981" fill="#fff">63412.0</text>
        <text x="3258" y="1957">2024-05-06 06:00</text>
      </g>

      <g fill="#c4c6ca">
        <text x="577" y="469">73666.0</text>
        <text x="2892" y="1356">56711.0</text>
      </g>
      <path d="M568 462H551M558 455L551 462L558 469" fill="none" stroke="#c4c6ca" strokeWidth="3" />

      {SUMMARY.map(([x, label, fill]) => <text key={label} x={x} y="377" fill={fill}>{label}</text>)}
      <g fill="none" stroke="#5d616c" strokeWidth="2">
        <circle cx="205" cy="369" r="17" />
        <path d="M195 365L205 375L215 365" />
        <circle cx="205" cy="413" r="17" />
        <path d="M200 403L210 413L200 423" />
        <path d="M203 1438V1424C203 1408 226 1408 226 1424V1438M199 1438H230M210 1442H219" strokeWidth="3" stroke="#777b88" />
      </g>
      {LEGENDS.map(({ y, items, caret }) => (
        <g key={y}>
          {items.map(([x, label, fill]) => <text key={label} x={x} y={y} fill={fill}>{label}</text>)}
          <path d={`M${caret - 10} ${y - 13}H${caret + 10}L${caret} ${y - 2}z`} fill="#777b88" />
        </g>
      ))}

      <rect x="3898" y="356" width="45" height="39" fill="#0a0c12" stroke="#2c3152" strokeWidth="3" />
      <path d="M3924 362H3934V372M3906 378V388H3916" fill="none" stroke="#6c707c" strokeWidth="3" />

      <g fill="none" stroke="#ee3a22" strokeWidth="7" strokeLinecap="round" strokeLinejoin="round">
        {STROKES.map((tiles, i) => <path key={i} d={toPath(flatten(tiles))} />)}
      </g>
      <path d="M3691 886L3698 896L3706 889z" fill="#000" />
      <path d="M3703 903Q3694 892 3707 889L3744 925L3734 937z" fill="#fff" />
      <path d="M3746 932Q3753 940 3742 943L3737 941z" fill="#fff" stroke="#fff" strokeWidth="3" />
      <path d="M3706 899L3736 927" stroke="#000" strokeWidth="2" strokeDasharray="6 3" />
      <circle cx="3689" cy="883" r="2" fill="#fff" />
    </svg>
  );
};

const IndicatorBar = () => (
  <div className="flex h-[73px] shrink-0 items-center border-t-2 border-black bg-[#0b0d0e] pt-[2px] pr-[8px] pl-[37px] text-[31px] text-[#777b88]">
    <button className="flex items-center gap-[20px] font-bold text-[#b9bcc8]"><Icon name="calendar" size={38} />定位到...</button>
    <span className="ml-[28px] h-[30px] w-px bg-[#33363d]" />
    <div className="ml-[29px] flex gap-[30px]">
      <button className="text-[#3f8cf4]">EMA</button>
      <button className="text-[#3f8cf4]">MA</button>
      <button>Alligator</button>
    </div>
    <span className="ml-[56px] h-[30px] w-px bg-[#33363d]" />
    <div className="ml-[28px] flex gap-[30px]">
      <button>CCI</button>
      <button>EMA</button>
      <button className="text-[#3f8cf4]">MACD</button>
      <button className="text-[#3f8cf4]">OBV</button>
      <button className="text-[#3f8cf4]">StochRSI</button>
    </div>
    <button aria-label="Edit indicators" className="ml-[50px]"><Icon name="edit" size={28} width={2} /></button>
    <div className="ml-auto flex gap-[38px]">
      <button className="text-[#3f8cf4]">對數</button>
      <button>%</button>
      <button className="text-[#3f8cf4]">自動</button>
    </div>
  </div>
);

const StatusBar = () => (
  <footer className="flex h-[88px] shrink-0 items-center border-t-4 border-black bg-[#0b0d0e] pr-[18px] pl-[29px] text-[31px] whitespace-nowrap text-[#a9adb8]">
    <span className="w-[122px]">資產(₮)</span>
    <button className="h-[58px] w-[300px] bg-[#0d1c2e] text-[32px] text-[#3f8cf4]">實時資產風控</button>
    <button aria-label="Edit ticker" className="ml-[77px]">
      <svg width="32" height="30" viewBox="0 0 32 30" aria-hidden="true"><path d="M1 28l2-10L20 1l8 7L10 26zM16 25h16v4H16z" fill="#8b8f9c" /></svg>
    </button>
    <span className="ml-[54px]">纳斯达克指数期货CFD</span>
    <span className="ml-[26px] text-[#3f8f5f]">+1.00%</span>
    <span className="ml-[26px]">18,183.825</span>
    <span className="ml-[82px]">BTC主力</span>
    <span className="ml-[26px] text-[#c4c6ca]">24H掛單</span>
    <span className="ml-[26px]">28億美元</span>
    <span className="ml-[82px]">OKX-BTC多空持仓人数比</span>
    <span className="ml-[26px]">震蕩盤整</span>
    <span className="ml-[26px]">1.14</span>
    <div className="relative ml-auto flex items-center">
      <button className="flex h-[56px] w-[254px] items-center gap-[14px] rounded-full bg-[#0d1c2e] pl-[30px] text-[#3f8cf4]">
        <svg width="42" height="42" viewBox="0 0 42 42" aria-hidden="true"><path d="M3 2l10 5h16l10-5v26c0 18-36 18-36 0z" fill="#c9d6ef" /><ellipse cx="21" cy="22" rx="14" ry="12" fill="#10224a" /><path d="M14 17h4v9h-4zM24 17h4v9h-4z" fill="#3f8cf4" /></svg>
        AI智能分析
      </button>
      <button className="ml-[24px] flex h-[54px] w-[207px] items-center gap-[10px] rounded-full bg-[#17181e] pl-[26px] text-[29px]">
        <svg width="32" height="36" viewBox="0 0 32 36" aria-hidden="true"><path d="M3 1l6 3h14l6-3v16q0 8-8 8H11q-8 0-8-8z" fill="#dfe6f5" /><circle cx="11" cy="14" r="6" fill="#3f6cc4" /><circle cx="21" cy="14" r="6" fill="#3f6cc4" /><circle cx="11" cy="14" r="3" fill="#dfe6f5" /><circle cx="21" cy="14" r="3" fill="#dfe6f5" /><path d="M9 27h14l-2 8H11z" fill="#7f9fdc" /></svg>
        人工客服
      </button>
      <svg className="ml-[26px]" width="36" height="40" viewBox="0 0 36 40" aria-hidden="true"><path d="M2 0h34v32H6v4h30v4H4q-4 0-4-4V2q0-2 2-2z" fill="#777b88" /><path d="M13 10c0-6 10-6 10 0 0 4-5 4-5 8M18 22v4" fill="none" stroke="#0b0d0e" strokeWidth="3" /></svg>
      <svg className="ml-[28px]" width="46" height="40" viewBox="0 0 46 40" fill="none" stroke="#8b8f9c" strokeWidth="4" aria-hidden="true"><path d="M2 14Q23-6 44 14M9 22Q23 8 37 22M16 30Q23 23 30 30" /><circle cx="23" cy="36" r="2" /></svg>
      <span className="ml-[86px]">1 : <span className="text-[#3f8f5f]">優</span></span>
      <span className="ml-[50px]">SGT</span>
      <span className="ml-[16px]">05/07 07:23:44</span>
      <div className="absolute -top-[66px] left-[588px] flex h-[124px] w-[124px] items-center justify-center rounded-full border-[7px] border-white bg-linear-to-br from-[#6db3f5] to-[#3b78e6] text-[31px] text-white">
        <svg className="absolute inset-0" width="110" height="110" viewBox="0 0 110 110" fill="none" aria-hidden="true"><path d="M64 18q14 6 18 18" stroke="#cfe4fb" strokeWidth="3" strokeDasharray="12 6" /><path d="M24 96q22-16 58-4-26 22-58 4z" fill="#7cc4f6" /></svg>
        <span className="relative">01:06</span>
      </div>
    </div>
  </footer>
);

const ToolIcon = ({ d, children }) => (
  <svg width="44" height="44" viewBox="0 0 44 44" fill="none" stroke="currentColor" strokeWidth="3" aria-hidden="true">
    {d && <path d={d} />}
    {children}
  </svg>
);

const TOOLS = [
  ['Open', <FolderOpen size={42} strokeWidth={1.800} />],
  ['Save', <Save size={42} strokeWidth={1.800} />],
  ['Screen', <ToolIcon d="M2 6h40v24H2zM14 39h16M22 30v8M5 22l6-8 6 8 6-4 8 4 9-3M36 9v4" />],
  ['Paste', <ToolIcon d="M16 36H3V9h7V5h9v4h7v5M20 16h13l7 7v17H20zM33 16v8h7M24 28h12M24 33h12" />],
  ['Copy', <ToolIcon d="M20 33H4V4h13l8 7v6M17 4v8h8M9 13h6M9 19h9M9 25h9M21 18h12l8 7v15H21zM26 28h10M26 33h10" />],
  ['Select', <ToolIcon><rect x="4" y="8" width="36" height="28" strokeDasharray="7 4" /></ToolIcon>],
  ['Erase', <ToolIcon d="M3 25L17 6h24v9L27 36H3zM3 25h24v11M27 25L41 7M10 16h24M22 6L10 24M31 6L19 24" />],
  ['Pick', <Pipette size={42} strokeWidth={1.800} />],
  ['Fill', <ToolIcon d="M3 20L20 5l18 18-18 15zM11 12l20 19M16 8l19 18M20 5l5 2M38 23v9M35 31h6v4h-6z" />],
  ['Pen', <ToolIcon d="M4 40l3-12L30 5q10-2 10 8L16 36zM10 30L34 9M14 34L37 13" />],
  ['Line', <ToolIcon d="M5 5l34 34" />],
  ['Arrow', <ToolIcon d="M5 5l34 34M19 5H5v14" />],
  ['Rectangle', <ToolIcon d="M2 7h40v30H2z" />],
  ['Ellipse', <ToolIcon><ellipse cx="22" cy="22" rx="20" ry="15" /></ToolIcon>],
  ['Solid rectangle', <ToolIcon><rect x="4" y="8" width="37" height="28" fill="currentColor" /></ToolIcon>],
  ['Solid ellipse', <ToolIcon><ellipse cx="22" cy="22" rx="20" ry="15" fill="currentColor" /></ToolIcon>],
  ['Text', <ToolIcon d="M6 38L22 6l16 32M12 27h20" />],
  ['Wave text', <ToolIcon d="M2 32l6-13 5 11 6-17 4 21M18 5l13 33M27 15l4-9 4 20 7 10M29 20h7" />],
  ['Undo', <RotateCcw size={42} strokeWidth={1.800} />],
  ['Board', <ToolIcon d="M4 5h36v34H4zM4 19h36M4 24h36M22 5v14M13 12h18M14 30l4 4 4-5 4 5 4-4" />],
  ['Zoom', <Search size={42} strokeWidth={1.800} />],
  ['Options', <ToolIcon d="M16 4l5-2 3 9 17 14-4 6-13-8L8 40l-5-5 16-14-4-8 5 1z" />],
  ['Pointer', <ToolIcon d="M4 4l34 12-13 5 13 13-5 5-13-13-5 11z" />],
  ['Help', <ToolIcon d="M12 15C10-1 36-1 34 14c-1 8-9 7-9 15h-6c0-11 8-10 8-15 0-5-7-5-8 1zM19 34h6v6h-6z" />],
];

const BrushTool = () => (
  <section className="absolute top-[407px] left-[4px] w-[206px] overflow-hidden rounded-lg bg-[#3d3d3d] pb-[18px] text-[#e0e0e0]">
    <div className="flex h-[56px] bg-[#f4f4f4]">
      <h2 className="flex-1 pl-[4px] font-['Open_Sans'] text-[27px] leading-[52px] text-[#a8a8a8]">BrushTool</h2>
      <button aria-label="Close BrushTool" className="h-[50px] w-[50px] bg-[#dcdcdc] text-[24px] text-white">×</button>
    </div>
    <div className="grid grid-cols-3 gap-x-[6px] gap-y-[6px] pr-[36px]">
      {TOOLS.map(([label, icon]) => (
        <button key={label} aria-label={label} className={`flex h-[52px] items-center justify-center border-2 ${label === 'Pen' || label === 'Options' ? 'border-t-black border-r-[#777] border-b-[#777] border-l-black' : 'border-[#434343]'}`}>
          {icon}
        </button>
      ))}
    </div>
    <div className="mt-[74px] flex gap-[6px] pl-[4px]">
      <div className="relative h-[52px] w-[95px] border-2 border-[#aaa] bg-white">
        <select aria-label="Brush width" className="h-full w-full appearance-none pl-[5px] font-['Open_Sans'] text-[31px] leading-none text-black"><option>4</option></select>
        <span className="pointer-events-none absolute top-0 right-0 flex h-full w-[42px] items-center justify-center bg-[#f0f0f0]"><svg width="22" height="11" aria-hidden="true"><path d="M0 0h22L11 11z" /></svg></span>
      </div>
      <button aria-label="Brush colour" className="flex h-[52px] w-[96px] border-2 border-[#aaa] bg-white p-[2px]">
        <span className="h-full w-[44px] border-2 border-black bg-[#ea3822]" />
        <span className="flex h-full flex-1 items-center justify-center bg-[#f0f0f0]"><svg width="22" height="11" aria-hidden="true"><path d="M0 0h22L11 11z" /></svg></span>
      </button>
    </div>
    <p className="mt-[29px] flex gap-[4px] pl-[7px] font-['Liberation_Sans'] text-[31px] leading-[40px] whitespace-nowrap"><span>x:2231</span><span>y:531</span></p>
  </section>
);

const APPS = [
  ['Task view', <svg width="58" height="56" viewBox="0 0 58 56"><path d="M0 18h44v37H0z" fill="#2b2b2b" /><path d="M15 0h43v38H15z" fill="#f7f7f5" opacity=".85" /></svg>],
  ['Store', <svg width="56" height="58" viewBox="0 0 56 58"><path d="M16 14V3h24v11" fill="none" stroke="#41a5e8" strokeWidth="4" /><rect y="10" width="56" height="48" rx="6" fill="#1f4f8f" /><path d="M15 23h12v11H15z" fill="#e8562f" /><path d="M29 23h12v11H29z" fill="#7db93c" /><path d="M15 36h12v11H15z" fill="#3fa3e6" /><path d="M29 36h12v11H29z" fill="#f6b93b" /></svg>],
  ['Browser', <svg width="56" height="58" viewBox="0 0 56 58" fill="none" stroke="#6db62c" strokeWidth="9"><path d="M10 31h37C48 8 15 6 11 30c-2 20 24 26 34 12" /><path d="M6 54C0 40 20 8 50 5" strokeWidth="4" /></svg>],
  ['Explorer', <svg width="60" height="54" viewBox="0 0 60 54"><path d="M0 3h22l6 6h32v42H0z" fill="#e0a02c" /><path d="M0 14h60v38H0z" fill="#f9cf58" /><path d="M10 40q0-6 6-6h28q6 0 6 6v14H10z" fill="#2473c6" /><path d="M22 44h16" stroke="#124a8c" strokeWidth="3" /></svg>],
  ['Mail', <svg width="60" height="54" viewBox="0 0 60 54"><path d="M0 20L30 0l30 20v34H0z" fill="#1f5fa8" /><path d="M6 18h48L30 40z" fill="#fff" /><path d="M0 20l30 22-28 12H0z" fill="#3a9be0" /><path d="M60 20L2 54h58z" fill="#58b7f0" /></svg>],
  ['Recorder', <svg width="58" height="58" viewBox="0 0 58 58"><rect width="58" height="58" rx="5" fill="#2d6bd6" /><path d="M10 18h30v22H10zM6 14l8 10M6 44l8-10" fill="none" stroke="#fff" strokeWidth="4" /><path d="M20 23l10 6-10 7zM44 25l8-5v19l-8-5z" fill="#fff" /></svg>],
  ['Telegram', <svg width="56" height="56" viewBox="0 0 56 56"><circle cx="28" cy="28" r="27" fill="#3394d2" /><path d="M10 28l34-14-6 30-10-8-5 5-1-10z" fill="#fff" /></svg>],
  ['Terminal', <svg width="58" height="58" viewBox="0 0 58 58"><rect width="58" height="58" rx="8" fill="#fff" /><circle cx="29" cy="29" r="23" fill="#2c62e8" /><path d="M32 6C14 10 6 24 14 34c8 2 22-12 18-28z" fill="#cfe0ff" /><path d="M44 24c-8 6-10 12-4 12 6-2 8-8 4-12zM22 46c6-4 12-1 18-4-4 8-14 8-18 4z" fill="#fff" /></svg>],
  ['Chrome', <svg width="58" height="58" viewBox="0 0 58 58"><circle cx="29" cy="29" r="28" fill="#f5c431" /><path d="M29 29L5 15A28 28 0 0 1 53 15z" fill="#dd4b3c" /><path d="M29 29L5 15A28 28 0 0 0 26 57z" fill="#3f9b4f" /><circle cx="29" cy="29" r="14" fill="#fff" /><circle cx="29" cy="29" r="11" fill="#3d7be8" /></svg>],
];

const Taskbar = () => (
  <div className="relative flex h-[102px] shrink-0 items-center bg-linear-to-r from-[#e5eeb5] via-[#dcebcf] to-[#e0ebbd] pt-[12px] pr-[36px] pl-[44px] text-[#333a33]">
    <svg width="62" height="54" viewBox="0 0 62 54" aria-hidden="true"><circle cx="42" cy="16" r="15" fill="#f29a35" /><path d="M12 53C-6 52-2 28 14 28 18 12 40 12 44 28 64 26 66 52 48 53z" fill="#b9cdf2" /></svg>
    <div className="ml-[14px] text-[29px] leading-[38px]">
      <p>20°C</p>
      <p className="text-[#6c7466]">多云</p>
    </div>
    <div className="absolute top-0 left-[1275px] flex h-full items-center pt-[12px]">
      <button aria-label="Start"><svg width="57" height="57" viewBox="0 0 57 57"><path d="M0 0h27v27H0zM30 0h27v27H30zM0 30h27v27H0zM30 30h27v27H30z" fill="#3b8fdc" /></svg></button>
      <label className="mr-[16px] ml-[34px] flex h-[74px] w-[521px] items-center rounded-full bg-[#f3f8ec] pr-[10px] pl-[26px]">
        <Search size={38} strokeWidth={2.200} className="shrink-0" />
        <input aria-label="Windows search" placeholder="搜索" className="ml-[20px] min-w-0 flex-1 bg-transparent text-[34px] outline-none placeholder:text-[#666d66]" />
        <svg width="106" height="62" viewBox="0 0 106 62" aria-hidden="true"><path d="M0 58Q36 20 100 58z" fill="#e9bd7a" /><path d="M4 48Q40 26 80 42L4 60z" fill="#3b8fdc" /><path d="M48 6v44" stroke="#b07a4a" strokeWidth="3" /><path d="M18 28Q22 4 48 4T78 28q-8-5-14 0-8-5-16 0-8-5-15 0-7-5-15 0z" fill="#f4c24f" /><path d="M33 28Q36 8 48 4q12 4 16 24-8-5-16 0-8-5-15 0z" fill="#4db89b" /><ellipse cx="86" cy="46" rx="14" ry="9" fill="none" stroke="#4dc2b4" strokeWidth="9" /></svg>
      </label>
      {APPS.map(([label, icon]) => (
        <button key={label} aria-label={label} className={`relative mr-[14px] flex h-[90px] w-[92px] items-center justify-center rounded-lg ${label === 'Terminal' ? 'bg-[#eef4e2]' : ''}`}>
          {icon}
          {label === 'Telegram' && <span className="absolute top-[8px] right-[6px] rounded-md bg-[#e2503f] px-[4px] text-[22px] leading-[30px] text-white">..21</span>}
          {label === 'Chrome' && <span className="absolute top-[2px] right-[6px] h-[38px] w-[38px] rounded-full bg-[#6273bb] text-[24px] leading-[38px] text-white">T</span>}
          {label === 'Terminal' && <span className="absolute bottom-0 h-[6px] w-[38px] rounded-full bg-[#2f86c9]" />}
          {['Recorder', 'Telegram', 'Chrome'].includes(label) && <span className="absolute bottom-0 h-[7px] w-[14px] rounded-full bg-[#7c8672]" />}
        </button>
      ))}
    </div>
    <div className="ml-auto flex items-center">
      <svg width="26" height="16" viewBox="0 0 26 16" fill="none" stroke="#222" strokeWidth="3" aria-hidden="true"><path d="M1 15L13 2l12 13" /></svg>
      <svg className="ml-[44px]" width="42" height="42" viewBox="0 0 42 42" aria-hidden="true"><ellipse cx="20" cy="22" rx="15" ry="20" fill="#181818" /><ellipse cx="20" cy="30" rx="9" ry="11" fill="#fff" /><circle cx="15" cy="10" r="3" fill="#fff" /><circle cx="24" cy="10" r="3" fill="#fff" /><path d="M6 20q14 8 28 0v5q-14 8-28 0z" fill="#dd3b2f" /><path d="M6 37h26v5H6zM13 15h13l-6 5z" fill="#f1a52c" /><rect x="22" y="21" width="20" height="15" fill="#f6c24c" /></svg>
      <Mic size={40} strokeWidth={1.800} className="ml-[38px] text-[#23574f]" />
      <span className="ml-[38px] text-[37px]">英</span>
      <span className="ml-[57px] text-[37px]">五</span>
      <svg className="ml-[54px]" width="40" height="40" viewBox="0 0 40 40" fill="none" stroke="#222" strokeWidth="3" aria-hidden="true"><path d="M26 4H2v26h30V20M10 37h18M19 30v7M30 2h8v10h-8zM34 12v12" /></svg>
      <Volume2 size={38} strokeWidth={1.800} className="ml-[17px]" />
      <svg className="ml-[20px]" width="42" height="32" viewBox="0 0 42 32" aria-hidden="true"><path d="M12 6h24v22H4V16" fill="none" stroke="#222" strokeWidth="3" /><path d="M14 10h18v14H8zM37 12h4v10h-4zM8 0L2 10h5l-2 8 8-11H8z" fill="#222" /></svg>
      <div className="ml-[38px] text-right text-[30px] leading-[38px]">
        <p>7:23</p>
        <p>2024/5/7</p>
      </div>
      <svg className="ml-[20px]" width="36" height="38" viewBox="0 0 36 38" fill="none" stroke="#222" strokeWidth="3" aria-hidden="true"><path d="M2 30h28M6 30V15C6 8 10 5 15 4M26 22v8M13 34h7M13 12h7l-7 10h7M24 3h8l-8 12h9" /></svg>
    </div>
  </div>
);

export default function App() {
  return (
    <div className="relative flex h-screen w-full flex-col overflow-hidden bg-[#15181a] font-[Roboto,'Noto_Sans_CJK_TC',sans-serif]">
      <div className="h-[3px] shrink-0 bg-linear-to-r from-[#8c9657] via-[#7d8b52] to-[#93a25f]" />
      <div className="mr-[5px] ml-[4px] flex min-h-0 flex-1 flex-col">
        <TitleBar />
        <div className="flex min-h-0 flex-1">
          <Sidebar />
          <main className="flex min-w-0 flex-1 flex-col">
            <TabBar />
            <IntervalBar />
            <DrawBar />
            <Chart />
            <IndicatorBar />
            <div className="flex h-[72px] shrink-0 items-center bg-[#0b0d0e] pl-[2px]">
              <Intervals />
              <button aria-label="Hide intervals" className="ml-[28px] text-[#5d616c]">
                <svg width="24" height="24" viewBox="0 0 24 24" stroke="currentColor" strokeWidth="2" aria-hidden="true"><path d="M1 1l22 22M23 1L1 23" /></svg>
              </button>
            </div>
            <StatusBar />
          </main>
        </div>
      </div>
      <div className="h-[3px] shrink-0 bg-[#5b5c3c]" />
      <Taskbar />
      <BrushTool />
    </div>
  );
}
